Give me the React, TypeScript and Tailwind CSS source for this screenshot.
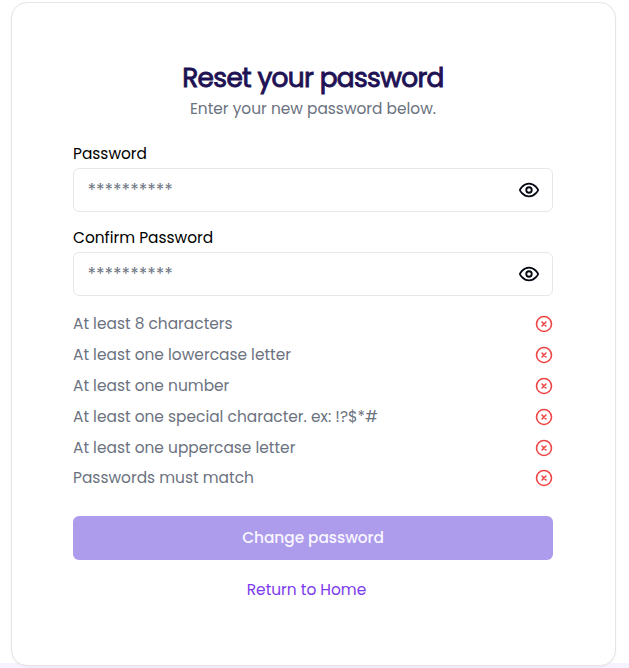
const rules = [
  "At least 8 characters",
  "At least one lowercase letter",
  "At least one number",
  "At least one special character. ex: !?$*#",
  "At least one uppercase letter",
  "Passwords must match",
];

function EyeIcon() {
  return (
    <svg
      className="size-[22px]"
      viewBox="0 0 24 24"
      fill="none"
      stroke="currentColor"
      strokeWidth="2"
      strokeLinecap="round"
      strokeLinejoin="round"
    >
      <path d="M2 12s3-7 10-7 10 7 10 7-3 7-10 7-10-7-10-7Z" />
      <circle cx="12" cy="12" r="3" />
    </svg>
  );
}

function CrossIcon() {
  return (
    <svg
      className="size-[18px] text-[#ef4444]"
      viewBox="0 0 24 24"
      fill="none"
      stroke="currentColor"
      strokeWidth="2.1"
      strokeLinecap="round"
      strokeLinejoin="round"
    >
      <circle cx="12" cy="12" r="10" />
      <path d="m14.6 9.4-5.2 5.2M9.4 9.4l5.2 5.2" />
    </svg>
  );
}

function PasswordField({ label }: { label: string }) {
  return (
    <div>
      <label className="flex h-7 items-center text-black">{label}</label>
      <div className="flex h-11 items-center justify-between rounded-md border border-[#e5e7eb] pl-[13.4px] pr-3 text-[#030712]">
        <span className="text-[17.6px] text-[#6b7280]">**********</span>
        <button type="button">
          <EyeIcon />
        </button>
      </div>
    </div>
  );
}

export default function App() {
  return (
    <main className="h-[668px] overflow-hidden bg-[linear-gradient(#fff_663px,#f5f3ff_663px)] pl-[11px] pt-[2px] font-[Poppins,Inter,sans-serif] text-[15.4px] leading-[22px]">
      <section className="h-[664px] w-[605px] rounded-2xl border border-[#e5e5e5] bg-white px-[61px] pt-[57px] shadow-xs">
        {/* Heading */}
        <div className="flex w-[480px] flex-col items-center">
          <h1 className="whitespace-nowrap text-[26.4px] leading-[35px] font-normal tracking-tight text-[#1e1254] [-webkit-text-stroke:0.9px_#1e1254]">
            Reset your password
          </h1>
          <p className="mt-[3px] text-[#6b7280]">Enter your new password below.</p>
        </div>

        {/* Fields */}
        <div className="mt-5 flex w-[480px] flex-col gap-3">
          <PasswordField label="Password" />
          <PasswordField label="Confirm Password" />
        </div>

        {/* Rules */}
        <ul className="mt-[13px] w-[480px]">
          {rules.map((rule) => (
            <li
              key={rule}
              className="flex h-[30.8px] items-center justify-between text-[#6b7280]"
            >
              <span className="tracking-[0.01px]">{rule}</span>
              <CrossIcon />
            </li>
          ))}
        </ul>

        <button
          type="button"
          className="mt-[22px] flex h-11 w-[480px] items-center justify-center rounded-md bg-[#ad9cec] font-medium tracking-[-0.05px] text-[#f8f6ff]"
        >
          Change password
        </button>
        <div className="mt-[19px] mr-[14px] text-center text-[#7c3aed]">
          <a href="#">Return to Home</a>
        </div>
      </section>
    </main>
  );
}
